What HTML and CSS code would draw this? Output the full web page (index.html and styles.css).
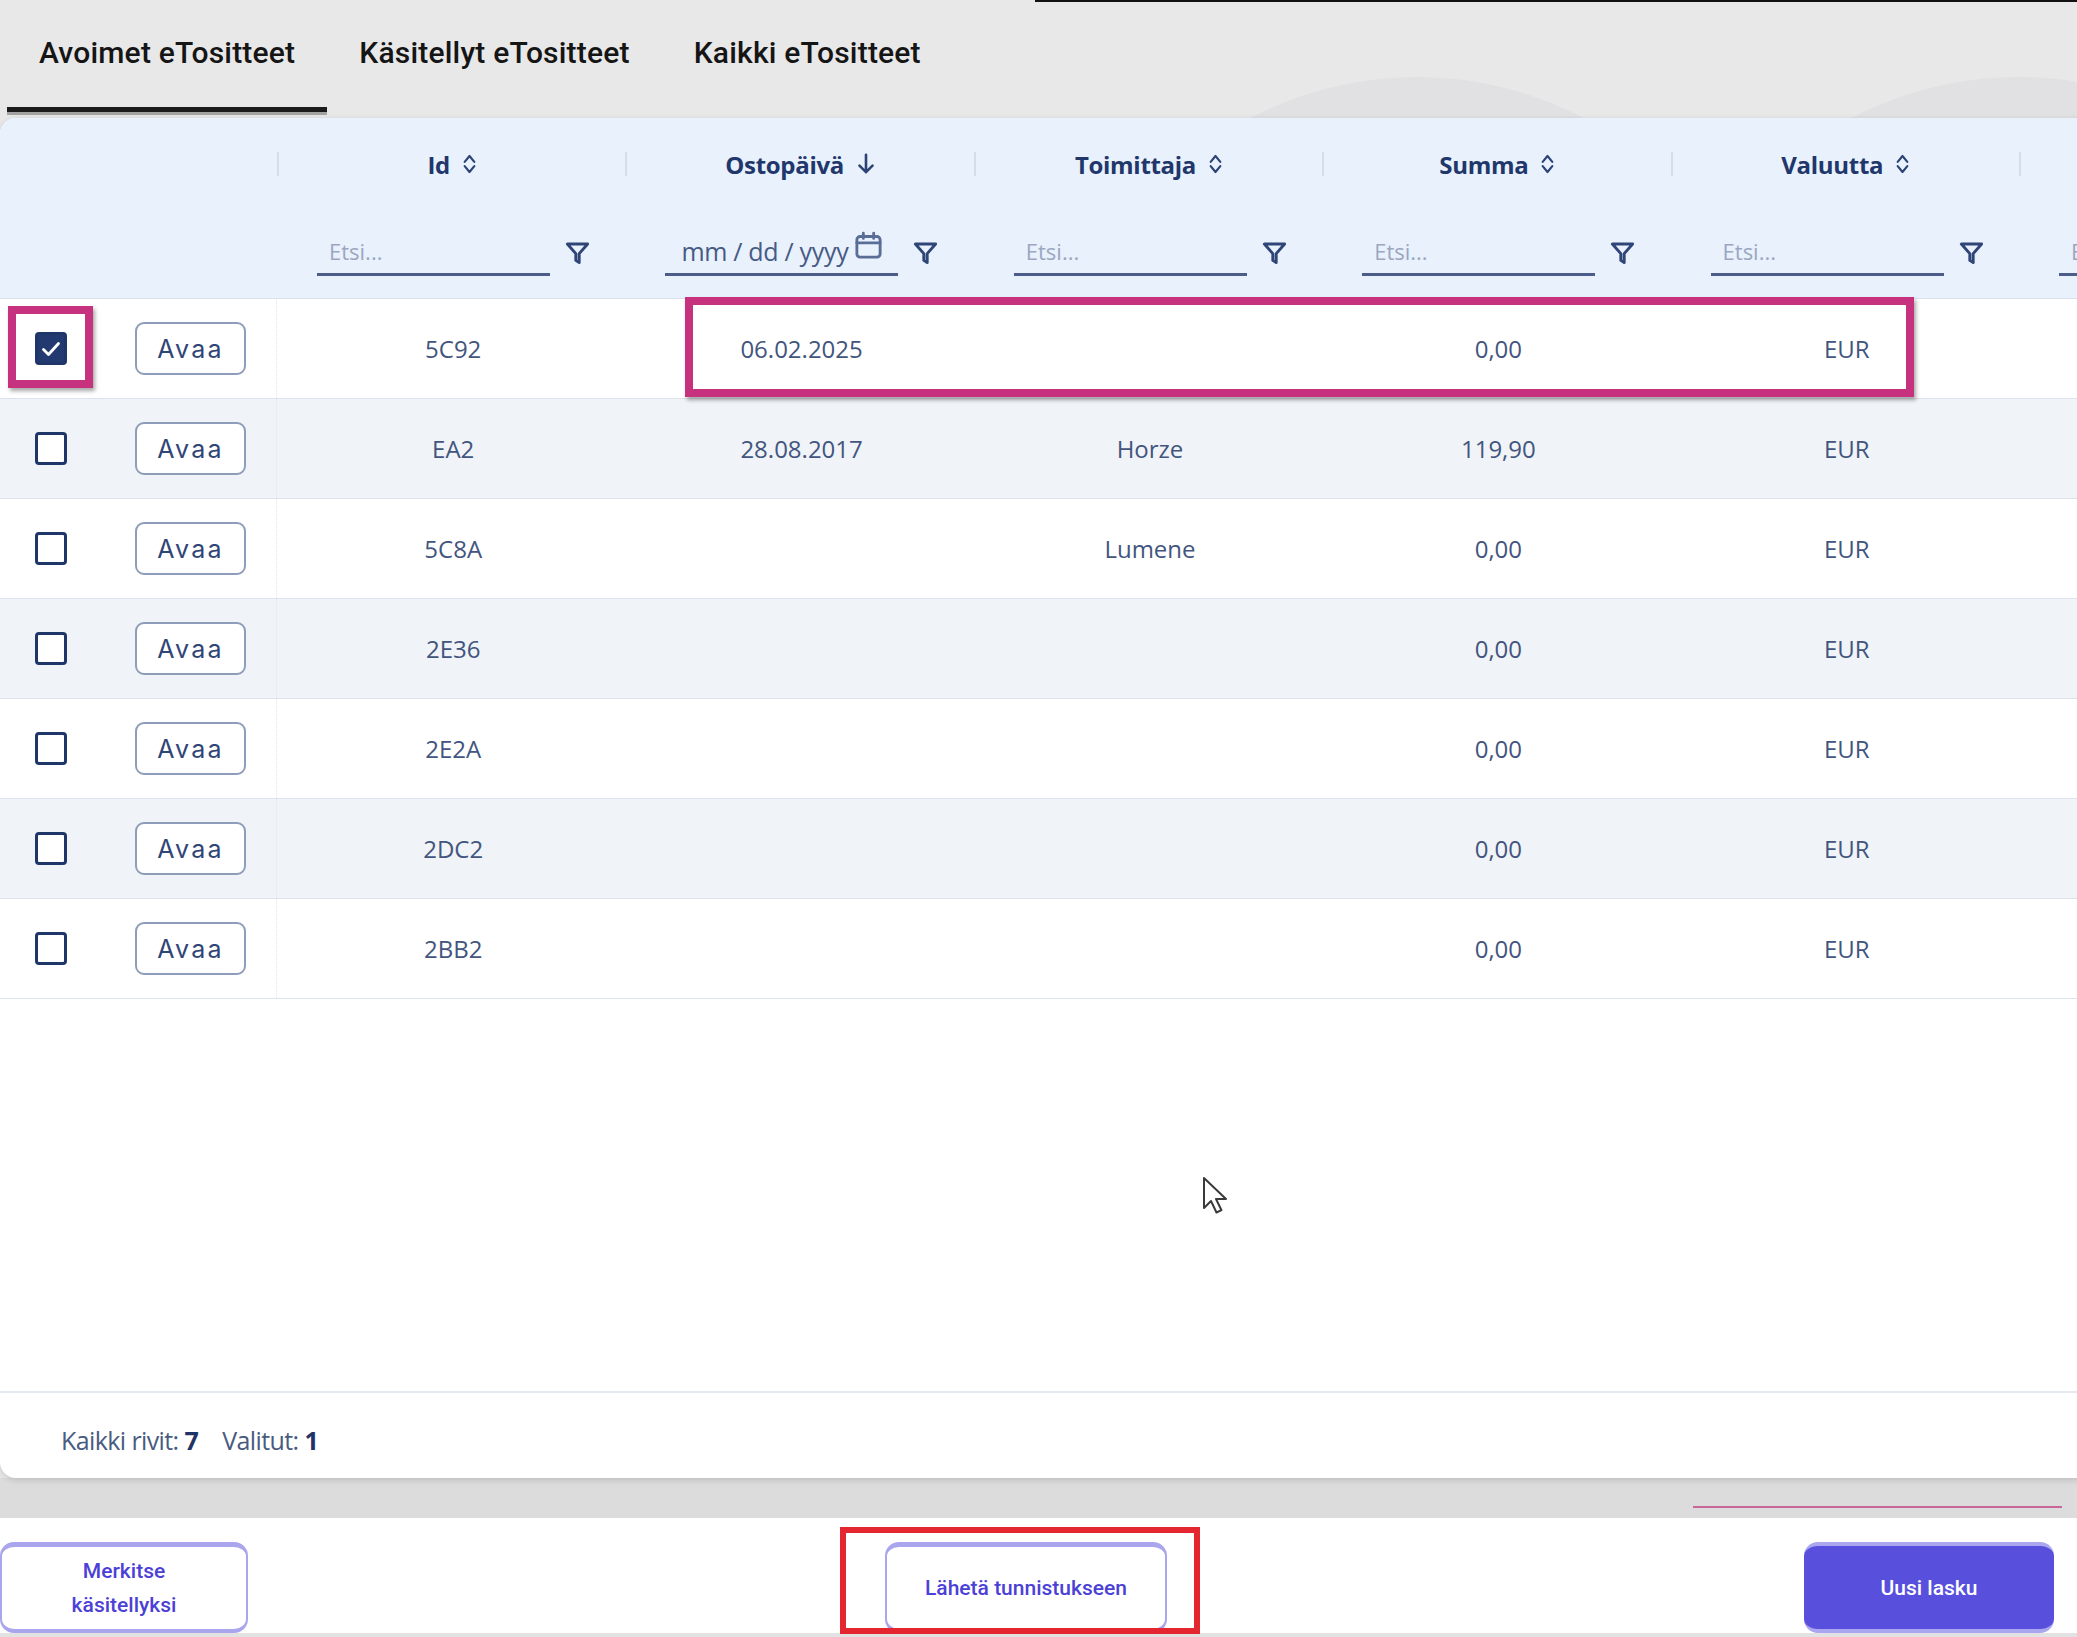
FILE: index.html
```html
<!DOCTYPE html>
<html lang="fi">
<head>
  <meta charset="UTF-8">
  <meta name="viewport" content="width=device-width, initial-scale=1.0">
  <title>eTositteet</title>
  <link rel="stylesheet" href="styles.css">
</head>
<body>
  <div class="topline"></div>
  <div class="deco deco-a"></div>
  <div class="deco deco-b"></div>

  <nav class="tabs">
    <a class="tab active">Avoimet eTositteet</a>
    <a class="tab">Käsitellyt eTositteet</a>
    <a class="tab">Kaikki eTositteet</a>
  </nav>

  <section class="card">
    <div class="grid head">
      <div class="th first"></div>
      <div class="th">
        <div class="th-label">Id <svg class="sort" viewBox="0 0 14 22"><path d="M2.5 9L7 3.5l4.5 5.5M2.5 13L7 18.5l4.5-5.5"/></svg></div>
        <div class="th-filter"><input placeholder="Etsi..."><svg class="funnel" viewBox="0 0 24 24"><path d="M3 4.5h18l-7.5 8.5v8l-3-2v-6z"/></svg></div>
      </div>
      <div class="th">
        <div class="th-label">Ostopäivä <svg class="arrow" viewBox="0 0 18 22"><path d="M9 2.5v16M3 12.5l6 6 6-6"/></svg></div>
        <div class="th-filter">
          <div class="date">mm / dd / yyyy <svg class="cal" viewBox="0 0 24 24"><rect x="3" y="5" width="18" height="16" rx="2.5"/><path d="M3 10h18M8 2.5v4M16 2.5v4"/></svg></div>
          <svg class="funnel" viewBox="0 0 24 24"><path d="M3 4.5h18l-7.5 8.5v8l-3-2v-6z"/></svg>
        </div>
      </div>
      <div class="th">
        <div class="th-label">Toimittaja <svg class="sort" viewBox="0 0 14 22"><path d="M2.5 9L7 3.5l4.5 5.5M2.5 13L7 18.5l4.5-5.5"/></svg></div>
        <div class="th-filter"><input placeholder="Etsi..."><svg class="funnel" viewBox="0 0 24 24"><path d="M3 4.5h18l-7.5 8.5v8l-3-2v-6z"/></svg></div>
      </div>
      <div class="th">
        <div class="th-label">Summa <svg class="sort" viewBox="0 0 14 22"><path d="M2.5 9L7 3.5l4.5 5.5M2.5 13L7 18.5l4.5-5.5"/></svg></div>
        <div class="th-filter"><input placeholder="Etsi..."><svg class="funnel" viewBox="0 0 24 24"><path d="M3 4.5h18l-7.5 8.5v8l-3-2v-6z"/></svg></div>
      </div>
      <div class="th">
        <div class="th-label">Valuutta <svg class="sort" viewBox="0 0 14 22"><path d="M2.5 9L7 3.5l4.5 5.5M2.5 13L7 18.5l4.5-5.5"/></svg></div>
        <div class="th-filter"><input placeholder="Etsi..."><svg class="funnel" viewBox="0 0 24 24"><path d="M3 4.5h18l-7.5 8.5v8l-3-2v-6z"/></svg></div>
      </div>
      <div class="th">
        <div class="th-label">&nbsp;</div>
        <div class="th-filter"><input placeholder="Etsi..."><svg class="funnel" viewBox="0 0 24 24"><path d="M3 4.5h18l-7.5 8.5v8l-3-2v-6z"/></svg></div>
      </div>
    </div>

    <div class="grid row">
      <div class="td sel"><span class="check on"><svg viewBox="0 0 26 26"><path d="M5.5 13.5l5 5 10-11"/></svg></span><button class="open">Avaa</button></div>
      <div class="td">5C92</div><div class="td">06.02.2025</div><div class="td"></div><div class="td">0,00</div><div class="td">EUR</div><div class="td"></div>
    </div>
    <div class="grid row">
      <div class="td sel"><span class="check"></span><button class="open">Avaa</button></div>
      <div class="td">EA2</div><div class="td">28.08.2017</div><div class="td">Horze</div><div class="td">119,90</div><div class="td">EUR</div><div class="td"></div>
    </div>
    <div class="grid row">
      <div class="td sel"><span class="check"></span><button class="open">Avaa</button></div>
      <div class="td">5C8A</div><div class="td"></div><div class="td">Lumene</div><div class="td">0,00</div><div class="td">EUR</div><div class="td"></div>
    </div>
    <div class="grid row">
      <div class="td sel"><span class="check"></span><button class="open">Avaa</button></div>
      <div class="td">2E36</div><div class="td"></div><div class="td"></div><div class="td">0,00</div><div class="td">EUR</div><div class="td"></div>
    </div>
    <div class="grid row">
      <div class="td sel"><span class="check"></span><button class="open">Avaa</button></div>
      <div class="td">2E2A</div><div class="td"></div><div class="td"></div><div class="td">0,00</div><div class="td">EUR</div><div class="td"></div>
    </div>
    <div class="grid row">
      <div class="td sel"><span class="check"></span><button class="open">Avaa</button></div>
      <div class="td">2DC2</div><div class="td"></div><div class="td"></div><div class="td">0,00</div><div class="td">EUR</div><div class="td"></div>
    </div>
    <div class="grid row">
      <div class="td sel"><span class="check"></span><button class="open">Avaa</button></div>
      <div class="td">2BB2</div><div class="td"></div><div class="td"></div><div class="td">0,00</div><div class="td">EUR</div><div class="td"></div>
    </div>

    <div class="empty"></div>
    <div class="card-foot">Kaikki rivit: <b>7</b><span class="sep"></span>Valitut: <b>1</b></div>

    <!-- annotation boxes -->
    <div class="mark mark-check"></div>
    <div class="mark mark-row"></div>
  </section>

  <div class="band"><span class="band-line"></span></div>

  <footer class="actions">
    <button class="btn ghost">Merkitse<br>käsitellyksi</button>
    <span class="boxed"><button class="btn ghost wide">Lähetä tunnistukseen</button></span>
    <button class="btn primary">Uusi lasku</button>
  </footer>

  <svg class="cursor" viewBox="0 0 26 40"><path d="M2 2v30l7-7 5.5 11.5 5-2.3L14 23h10z"/></svg>
</body>
</html>
```

FILE: styles.css
```css
body { margin: 0; width: 2077px; height: 1637px; overflow: hidden; position: relative; background: #e8e8e8; font-family: "Open Sans", sans-serif; color: #44577f; }

.topline { position: absolute; top: 0; left: 1035px; right: 0; height: 2px; background: #111; }
.deco { position: absolute; top: 77px; width: 720px; height: 720px; border-radius: 50%; background: #e1e1e3; }
.deco-a { left: 1057px; }
.deco-b { left: 1658px; }

/* tabs */
.tabs { display: flex; height: 118px; padding-left: 7px; position: relative; }
.tab { box-sizing: border-box; height: 112px; padding: 35px 32px 0; line-height: 36px; font-family: Roboto, sans-serif; font-size: 30px; font-weight: 500; letter-spacing: 0.2px; color: #151515; border-bottom: 5px solid transparent; }
.tab.active { border-bottom-color: #1b1b1b; box-shadow: 0 3px 0 #a3a3a3; }

/* table card */
.card { position: relative; z-index: 1; width: 2110px; background: #fff; border-radius: 16px 0 0 16px; box-shadow: 0 2px 6px rgba(0, 0, 0, 0.14); overflow: hidden; }
.grid { display: grid; grid-template-columns: 277px repeat(6, 348.4px); }
.head { height: 181px; background: #e8f1fc; border-bottom: 1px solid #d9e1ec; box-sizing: border-box; }
.th-label { margin-top: 34px; height: 24px; border-left: 2px solid #d5dde8; display: flex; align-items: center; justify-content: center; gap: 12px; font-weight: 700; font-size: 24px; letter-spacing: -0.3px; color: #21376b; }
.th-filter { margin-top: 52px; display: flex; align-items: center; padding-left: 40px; }
.th-filter input, .date { box-sizing: border-box; width: 233px; height: 48px; padding: 0 12px; border: none; border-bottom: 3px solid #4b5c88; background: transparent; font-family: "Open Sans", sans-serif; font-size: 22px; color: #465a84; outline: none; }
.th-filter input::placeholder { color: #9ba7c0; }
.date { display: flex; align-items: center; gap: 5px; padding-left: 16px; font-size: 25px; letter-spacing: -0.3px; white-space: nowrap; }
.sort { width: 15px; height: 24px; fill: none; stroke: #2d4376; stroke-width: 2; stroke-linecap: round; stroke-linejoin: round; }
.arrow { width: 20px; height: 24px; fill: none; stroke: #2d4376; stroke-width: 2.4; stroke-linecap: round; stroke-linejoin: round; }
.funnel { width: 27px; height: 27px; margin-left: 14px; fill: none; stroke: #2f4577; stroke-width: 2.6; stroke-linejoin: round; }
.cal { width: 31px; height: 31px; margin-top: -10px; flex-shrink: 0; fill: none; stroke: #5a6d96; stroke-width: 2.2; stroke-linecap: round; }

.row { height: 100px; box-sizing: border-box; border-bottom: 1px solid #dde3ec; background: #fff; }
.row:nth-of-type(odd) { background: #f0f3f7; }
.td { display: flex; align-items: center; justify-content: center; padding-left: 4px; font-size: 24px; color: #42557e; }
.td.sel { justify-content: flex-start; padding-left: 35px; gap: 68px; border-right: 1px dotted #e1e6ee; }
.check { box-sizing: border-box; width: 32px; height: 33px; border: 3.5px solid #1f3668; border-radius: 4px; background: #fff; display: flex; align-items: center; justify-content: center; }
.check.on { background: #233a70; }
.check svg { width: 26px; height: 26px; fill: none; stroke: #fff; stroke-width: 2.8; stroke-linecap: round; stroke-linejoin: round; }
.open { box-sizing: border-box; width: 111px; height: 53px; border: 2px solid #8e9dba; border-radius: 9px; background: #fff; font-family: Inter, sans-serif; font-size: 25px; letter-spacing: 2.2px; color: #2f4576; cursor: pointer; }

.empty { height: 392px; }
.card-foot { height: 87px; box-sizing: border-box; border-top: 2px solid #e4e9f0; padding: 32px 0 0 61px; line-height: 30px; font-size: 25px; letter-spacing: -0.6px; color: #4a5b80; }
.card-foot b { color: #1f3366; }
.card-foot .sep { display: inline-block; width: 24px; }

.mark { position: absolute; box-sizing: border-box; border: 8px solid #c7327f; box-shadow: 2px 3px 4px rgba(0, 0, 0, 0.35); }
.mark-check { left: 8px; top: 188px; width: 85px; height: 82px; }
.mark-row { left: 685px; top: 179px; width: 1229px; height: 100px; }

/* bottom */
.band { height: 40px; background: #dcdcdc; display: flex; justify-content: flex-end; align-items: flex-start; padding: 28px 15px 0 0; box-sizing: border-box; }
.band-line { width: 369px; height: 2px; background: #c9679b; }

.actions { height: 119px; box-sizing: border-box; background: #fff; border-bottom: 4px solid #e2e2e2; display: flex; justify-content: space-between; align-items: flex-start; padding: 24px 23px 0 0; }
.btn { box-sizing: border-box; height: 91px; border-radius: 14px; font-family: Roboto, sans-serif; font-size: 21px; font-weight: 500; line-height: 34px; cursor: pointer; }
.ghost { width: 248px; background: #fff; color: #4b41d6; border: 2px solid #aaa6ee; border-top-width: 5px; border-bottom-width: 4px; }
.ghost.wide { width: 282px; }
.primary { width: 250px; background: #5850dd; color: #fff; border: none; border-top: 4px solid #aaa6ef; border-bottom: 4px solid #aaa6ef; }
.boxed { position: relative; display: flex; }
.boxed::after { content: ""; position: absolute; left: -45px; right: -33px; top: -15px; bottom: -1px; border: 6px solid #e3262f; }

.cursor { position: absolute; left: 1202px; top: 1176px; width: 26px; height: 40px; z-index: 5; fill: #fff; stroke: #3a3a3a; stroke-width: 2; stroke-linejoin: round; }
```
